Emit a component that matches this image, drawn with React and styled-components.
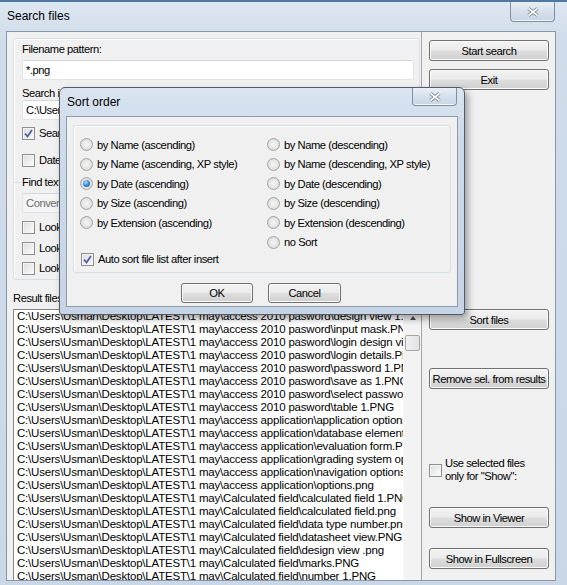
import React from "react";
import styled, { createGlobalStyle, css } from "styled-components";

const GlobalStyle = createGlobalStyle`
  html, body { margin: 0; padding: 0; background: #cdd9e7; }
  body { font-family: "Liberation Sans", Arial, sans-serif; }
`;

// narrow dialog font of the old app
const uiFont = css`
  font-family: "Liberation Sans", Arial, sans-serif;
  font-size: 11.2px;
  letter-spacing: -0.45px;
`;

const Window = styled.div`
  position: relative;
  width: 567px;
  height: 585px;
  box-sizing: border-box;
  overflow: hidden;
  border-top: 2px solid #4f78a3;
  background: linear-gradient(180deg, #dde7f2 0px, #d0dcea 40px, #c9d7e7 100%);
  display: flex;
  flex-direction: column;
`;

const TitleBar = styled.div`
  display: flex;
  align-items: flex-start;
  height: ${p => p.$h}px;
  flex: none;
`;

const Title = styled.span`
  padding-left: 7px;
  font: 12px "Liberation Sans", Arial, sans-serif;
  line-height: ${p => p.$h}px;
  color: #000;
`;

const CloseBox = styled.div`
  margin-left: auto;
  margin-right: ${p => p.$mr}px;
  margin-top: ${p => p.$mt || 0}px;
  width: 45px;
  height: ${p => p.$h}px;
  box-sizing: border-box;
  border: 1px solid #7f8fa3;
  border-top: none;
  border-radius: 0 0 4px 4px;
  background: linear-gradient(180deg, #e9eff6 0%, #d6e0ec 50%, #c8d5e4 100%);
  box-shadow: inset 0 -1px 0 #f4f7fb;
  display: flex;
  align-items: center;
  justify-content: center;
`;

const Client = styled.div`
  flex: 1;
  margin: 0 11px 4px 6px;
  border: 1px solid #8797aa;
  background: #f0f0f0;
  display: grid;
  grid-template-columns: 414px 1fr;
  min-height: 0;
  overflow: hidden;
`;

const LeftCol = styled.div`
  display: flex;
  flex-direction: column;
  padding: 6px 0 0 6px;
  min-height: 0;
`;

const RightCol = styled.div`
  border-left: 1px solid #a5a5a5;
  padding: 8px 6px 0 7px;
  display: flex;
  flex-direction: column;
`;

const GroupBox = styled.div`
  box-sizing: border-box;
  height: 242px;
  margin-right: 1px;
  border: 1px solid #d5dfe5;
  border-radius: 3px;
  box-shadow: inset 1px 1px 0 #fff;
  padding: 0 0 0 8px;
  display: flex;
  flex-direction: column;
  flex: none;
`;

const Label = styled.div`
  ${uiFont};
  height: 14px;
  line-height: 14px;
  margin-top: ${p => p.$mt || 0}px;
  white-space: nowrap;
  color: #000;
`;

const TextField = styled.div`
  ${uiFont};
  box-sizing: border-box;
  height: 20px;
  width: 392px;
  margin-top: ${p => p.$mt || 0}px;
  border: 1px solid #e2e3ea;
  border-top-color: #d3d6de;
  border-radius: 2px;
  background: ${p => (p.$disabled ? "#f4f4f4" : "#fff")};
  color: ${p => (p.$disabled ? "#6d6d6d" : "#000")};
  padding-left: 3px;
  line-height: 18px;
  white-space: nowrap;
  overflow: hidden;
`;

const SectionTitle = styled.div`
  ${uiFont};
  height: 14px;
  margin-top: ${p => p.$mt}px;
  margin-left: -8px;
  display: flex;
  align-items: center;
  white-space: nowrap;
  &::before {
    content: "";
    width: 7px;
    height: 1px;
    background: #d5dfe5;
    margin-right: 1px;
  }
`;

const CheckRow = styled.label`
  ${uiFont};
  display: flex;
  align-items: center;
  gap: ${p => p.$gap || 4}px;
  height: ${p => p.$h || 14}px;
  margin-top: ${p => p.$mt || 0}px;
  margin-left: ${p => p.$ml || 0}px;
  line-height: 13px;
  white-space: nowrap;
  color: #000;
`;

const Box = styled.span`
  flex: none;
  box-sizing: border-box;
  width: 13px;
  height: 13px;
  border: 1px solid #8e8f8f;
  background: linear-gradient(135deg, #dcdcdc 0%, #f6f6f6 80%);
  box-shadow: inset 0 0 0 1px #f4f4f4;
  display: flex;
  align-items: center;
  justify-content: center;
`;

const Radio = styled.span`
  flex: none;
  box-sizing: border-box;
  width: 13px;
  height: 13px;
  border-radius: 50%;
  border: 1px solid #a3a3a3;
  background: radial-gradient(circle at 50% 50%, #f5f5f5 0%, #e4e4e4 55%, #cfcfcf 100%);
  display: flex;
  align-items: center;
  justify-content: center;
  &::after {
    content: "";
    display: ${p => (p.$on ? "block" : "none")};
    width: 7px;
    height: 7px;
    border-radius: 50%;
    background: radial-gradient(circle at 40% 35%, #b7e4ff 0%, #3c92d8 45%, #144f8c 100%);
  }
`;

const Check = ({ on }) => (
  <Box>
    {on && (
      <svg width="9" height="9" viewBox="0 0 9 9">
        <path d="M1 4.5 L3.5 7.5 L8 1" fill="none" stroke="#4c61a6" strokeWidth="1.8" />
      </svg>
    )}
  </Box>
);

const ListBox = styled.div`
  flex: 1;
  min-height: 0;
  margin-top: 4px;
  border: 1px solid #828790;
  border-right: none;
  border-bottom: none;
  background: #fff;
  display: flex;
  overflow: hidden;
`;

const Lines = styled.div`
  flex: 1;
  min-width: 0;
  overflow: hidden;
  padding-left: 3px;
`;

const Line = styled.div`
  height: 13px;
  font: 11.5px "Liberation Sans", Arial, sans-serif;
  line-height: 13px;
  letter-spacing: -0.2px;
  white-space: nowrap;
  overflow: hidden;
  color: #000;
`;

const ScrollBar = styled.div`
  flex: none;
  width: 17px;
  background: #f3f3f3;
  border-left: 1px solid #f8f8f8;
  display: flex;
  flex-direction: column;
  align-items: center;
`;

const Arrow = styled.div`
  margin-top: 6px;
  width: 0;
  height: 0;
  border-left: 3.5px solid transparent;
  border-right: 3.5px solid transparent;
  border-bottom: 4px solid #4d4d4d;
`;

const Thumb = styled.div`
  margin-top: 15px;
  box-sizing: border-box;
  width: 15px;
  height: 16px;
  border: 1px solid #a6a6a6;
  border-radius: 2px;
  background: linear-gradient(90deg, #f0f0f0, #e2e2e2);
`;

const Button = styled.button`
  ${uiFont};
  display: block;
  flex: none;
  box-sizing: border-box;
  width: ${p => p.$w || 120}px;
  height: ${p => p.$h || 21}px;
  margin: ${p => p.$mt || 0}px 0 0 0;
  padding: 0;
  border: 1px solid #707070;
  border-radius: 3px;
  background: linear-gradient(180deg, #f3f3f3 0%, #ebebeb 48%, #dddddd 52%, #d0d0d0 100%);
  box-shadow: inset 0 0 0 1px #fbfbfb;
  color: #000;
  white-space: nowrap;
`;

const Dialog = styled.div`
  position: absolute;
  left: 59px;
  top: 85px;
  width: 406px;
  height: 228px;
  box-sizing: border-box;
  border: 1px solid #505c69;
  border-radius: 6px 6px 3px 3px;
  background: linear-gradient(180deg, #dbe5f1 0px, #cedbea 40px, #c6d4e5 100%);
  box-shadow: 3px 4px 7px rgba(0, 0, 0, 0.35);
  display: flex;
  flex-direction: column;
`;

const DialogClient = styled.div`
  flex: 1;
  margin: 0 6px 7px 6px;
  border: 1px solid #8d9cab;
  background: #f0f0f0;
  display: flex;
  flex-direction: column;
`;

const OptionsGroup = styled.div`
  box-sizing: border-box;
  height: 148px;
  margin: 8px 6px 0 6px;
  border: 1px solid #d5dfe5;
  border-radius: 3px;
  box-shadow: inset 1px 1px 0 #fff;
  padding: 9px 0 0 6px;
`;

const Columns = styled.div`
  display: flex;
`;

const Column = styled.div`
  width: ${p => p.$w}px;
  display: flex;
  flex-direction: column;
`;

const Option = styled.label`
  ${uiFont};
  display: flex;
  align-items: center;
  gap: 4px;
  height: 19.5px;
  white-space: nowrap;
  color: #000;
`;

const ButtonRow = styled.div`
  display: flex;
  justify-content: center;
  gap: 15px;
  margin-top: 10px;
  padding-right: 2px;
`;

const XGlyph = () => (
  <svg width="12" height="10" viewBox="0 0 12 10">
    <path d="M1.5 1.5 L10.5 8.5 M10.5 1.5 L1.5 8.5" stroke="#66768a" strokeWidth="3.4" />
    <path d="M1.5 1.5 L10.5 8.5 M10.5 1.5 L1.5 8.5" stroke="#ffffff" strokeWidth="1.7" />
  </svg>
);

const base = "C:\\Users\\Usman\\Desktop\\LATEST\\1 may\\";
const files = [
  "access 2010 pasword\\design view 1.PNG",
  "access 2010 pasword\\input mask.PNG",
  "access 2010 pasword\\login design view.PNG",
  "access 2010 pasword\\login details.PNG",
  "access 2010 pasword\\password 1.PNG",
  "access 2010 pasword\\save as 1.PNG",
  "access 2010 pasword\\select password.PNG",
  "access 2010 pasword\\table 1.PNG",
  "access application\\application options.PNG",
  "access application\\database elements.PNG",
  "access application\\evaluation form.PNG",
  "access application\\grading system options.PNG",
  "access application\\navigation options.PNG",
  "access application\\options.png",
  "Calculated field\\calculated field 1.PNG",
  "Calculated field\\calculated field.png",
  "Calculated field\\data  type number.png",
  "Calculated field\\datasheet view.PNG",
  "Calculated field\\design view .png",
  "Calculated field\\marks.PNG",
  "Calculated field\\number 1.PNG",
  "Calculated field\\number 2.PNG",
];

const ascending = [
  ["by Name (ascending)", false],
  ["by Name (ascending, XP style)", false],
  ["by Date (ascending)", true],
  ["by Size (ascending)", false],
  ["by Extension (ascending)", false],
];

const descending = [
  "by Name (descending)",
  "by Name (descending, XP style)",
  "by Date (descending)",
  "by Size (descending)",
  "by Extension (descending)",
  "no Sort",
];

export default function App() {
  return (
    <>
      <GlobalStyle />
      <Window>
        <TitleBar $h={29}>
          <Title $h={29}>Search files</Title>
          <CloseBox $mr={12} $h={20}>
            <XGlyph />
          </CloseBox>
        </TitleBar>

        <Client>
          <LeftCol>
            <GroupBox>
              <Label $mt={3}>Filename pattern:</Label>
              <TextField $mt={4}>*.png</TextField>
              <Label $mt={6}>Search in folder:</Label>
              <TextField>C:\Users\Usman\Desktop\LATEST</TextField>
              <CheckRow $mt={6}>
                <Check on />
                Search subfolders
              </CheckRow>
              <CheckRow $mt={13}>
                <Check />
                Date filter
              </CheckRow>
              <SectionTitle $mt={8}>Find text in files</SectionTitle>
              <TextField $mt={4} $disabled>
                Convert
              </TextField>
              <CheckRow $mt={7}>
                <Check />
                Look for whole words
              </CheckRow>
              <CheckRow $mt={7}>
                <Check />
                Look case sensitive
              </CheckRow>
              <CheckRow $mt={6}>
                <Check />
                Look in subfolders
              </CheckRow>
            </GroupBox>
            <Label $mt={11}>Result files:</Label>
            <ListBox>
              <Lines>
                {files.map(f => (
                  <Line key={f}>{base + f}</Line>
                ))}
              </Lines>
              <ScrollBar>
                <Arrow />
                <Thumb />
              </ScrollBar>
            </ListBox>
          </LeftCol>

          <RightCol>
            <Button>Start search</Button>
            <Button $mt={8}>Exit</Button>
            <Button $mt={219}>Sort files</Button>
            <Button $mt={38}>Remove sel. from results</Button>
            <CheckRow $mt={68} $h={26} $gap={3}>
              <Check />
              <span>
                Use selected files
                <br />
                only for "Show":
              </span>
            </CheckRow>
            <Button $mt={24}>Show in Viewer</Button>
            <Button $mt={20}>Show in Fullscreen</Button>
          </RightCol>
        </Client>

        <Dialog>
          <TitleBar $h={28}>
            <Title $h={28}>Sort order</Title>
            <CloseBox $mr={7} $h={18}>
              <XGlyph />
            </CloseBox>
          </TitleBar>
          <DialogClient>
            <OptionsGroup>
              <Columns>
                <Column $w={187}>
                  {ascending.map(([t, on]) => (
                    <Option key={t}>
                      <Radio $on={on} />
                      {t}
                    </Option>
                  ))}
                </Column>
                <Column $w={180}>
                  {descending.map(t => (
                    <Option key={t}>
                      <Radio />
                      {t}
                    </Option>
                  ))}
                </Column>
              </Columns>
              <CheckRow $ml={1}>
                <Check on />
                Auto sort file list after insert
              </CheckRow>
            </OptionsGroup>
            <ButtonRow>
              <Button $w={72} $h={20}>OK</Button>
              <Button $w={73} $h={20}>Cancel</Button>
            </ButtonRow>
          </DialogClient>
        </Dialog>
      </Window>
    </>
  );
}
